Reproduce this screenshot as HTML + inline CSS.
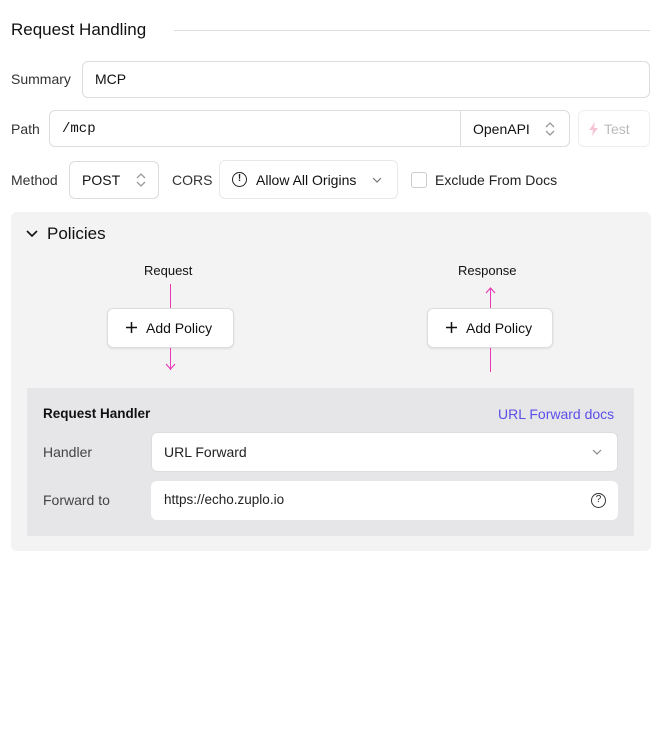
<!DOCTYPE html>
<html><head><style>
*{box-sizing:border-box;margin:0;padding:0}
body{width:670px;height:740px;background:#fff;font-family:"Liberation Sans",sans-serif;color:#222;position:relative;overflow:hidden}
.a{position:absolute}
.box{position:absolute;background:#fff;border:1px solid #dcdcdf;border-radius:6px}
.t{position:absolute;font-size:14px;color:#333}
.pink{position:absolute;width:1px;background:#e83ab5}
svg{position:absolute}
</style></head><body>
<div class="t" style="left:11px;top:20px;font-size:17px;color:#111">Request Handling</div>
<div class="a" style="left:174px;top:30px;width:476px;height:1px;background:#ddd"></div>

<div class="t" style="left:11px;top:71px">Summary</div>
<div class="box" style="left:82px;top:61px;width:568px;height:37px"></div>
<div class="t" style="left:95px;top:71px;color:#111">MCP</div>

<div class="t" style="left:11px;top:121px">Path</div>
<div class="box" style="left:49px;top:110px;width:521px;height:37px"></div>
<div class="a" style="left:460px;top:111px;width:1px;height:35px;background:#ddd"></div>
<div class="t" style="left:62px;top:121px;font-family:'Liberation Mono',monospace;color:#111">/mcp</div>
<div class="t" style="left:473px;top:121px;color:#111">OpenAPI</div>
<svg style="left:544px;top:121px" width="12" height="16" viewBox="0 0 12 16"><path d="M2 6l4-4 4 4M2 10l4 4 4-4" fill="none" stroke="#999" stroke-width="1.3"/></svg>
<div class="box" style="left:578px;top:110px;width:72px;height:37px;border-color:#eee"></div>
<svg style="left:588px;top:122px" width="11" height="14" viewBox="0 0 11 14"><path d="M7 0L1 8h4l-1 6 6-8H6z" fill="#f6c4d6"/></svg>
<div class="t" style="left:604px;top:121px;color:#bbb">Test</div>

<div class="t" style="left:11px;top:172px">Method</div>
<div class="box" style="left:69px;top:161px;width:90px;height:38px"></div>
<div class="t" style="left:82px;top:172px;color:#111">POST</div>
<svg style="left:135px;top:172px" width="12" height="16" viewBox="0 0 12 16"><path d="M2 6l4-4 4 4M2 10l4 4 4-4" fill="none" stroke="#999" stroke-width="1.3"/></svg>
<div class="t" style="left:172px;top:172px">CORS</div>
<div class="box" style="left:219px;top:160px;width:179px;height:39px;border-color:#e8e8e8"></div>
<div class="a" style="left:232px;top:172px;width:15px;height:15px;border:1.5px solid #222;border-radius:50%;font-size:10px;text-align:center;line-height:12px;font-weight:bold">!</div>
<div class="t" style="left:256px;top:172px;color:#111">Allow All Origins</div>
<svg style="left:372px;top:176px" width="10" height="8" viewBox="0 0 10 8"><path d="M1 2l4 4 4-4" fill="none" stroke="#777" stroke-width="1.2"/></svg>
<div class="a" style="left:411px;top:172px;width:16px;height:16px;border:1px solid #ccc;border-radius:3px"></div>
<div class="t" style="left:435px;top:172px;color:#222">Exclude From Docs</div>

<div class="a" style="left:11px;top:212px;width:640px;height:339px;background:#f3f3f4;border-radius:6px"></div>
<svg style="left:26px;top:229px" width="12" height="9" viewBox="0 0 12 9"><path d="M1 2l5 5 5-5" fill="none" stroke="#111" stroke-width="1.6"/></svg>
<div class="t" style="left:47px;top:224px;font-size:17px;color:#111">Policies</div>

<div class="t" style="left:144px;top:263px;font-size:13px;color:#111">Request</div>
<div class="pink" style="left:170px;top:284px;height:24px"></div>
<div class="box" style="left:107px;top:308px;width:127px;height:40px;box-shadow:0 1px 2px rgba(0,0,0,.08)"></div>
<svg style="left:125px;top:321px" width="13" height="13" viewBox="0 0 13 13"><path d="M6.5 1v11M1 6.5h11" stroke="#111" stroke-width="1.5"/></svg>
<div class="t" style="left:146px;top:320px;color:#111">Add Policy</div>
<div class="pink" style="left:170px;top:348px;height:22px"></div>
<svg style="left:165px;top:362px" width="11" height="9" viewBox="0 0 11 9"><path d="M1 2l4.5 5 4.5-5" fill="none" stroke="#e83ab5" stroke-width="1.2"/></svg>

<div class="t" style="left:458px;top:263px;font-size:13px;color:#111">Response</div>
<svg style="left:485px;top:286px" width="11" height="9" viewBox="0 0 11 9"><path d="M1 7l4.5-5 4.5 5" fill="none" stroke="#e83ab5" stroke-width="1.2"/></svg>
<div class="pink" style="left:490px;top:288px;height:20px"></div>
<div class="box" style="left:427px;top:308px;width:126px;height:40px;box-shadow:0 1px 2px rgba(0,0,0,.08)"></div>
<svg style="left:445px;top:321px" width="13" height="13" viewBox="0 0 13 13"><path d="M6.5 1v11M1 6.5h11" stroke="#111" stroke-width="1.5"/></svg>
<div class="t" style="left:466px;top:320px;color:#111">Add Policy</div>
<div class="pink" style="left:490px;top:348px;height:24px"></div>

<div class="a" style="left:27px;top:388px;width:607px;height:148px;background:#e6e6e9;border-radius:2px"></div>
<div class="t" style="left:43px;top:406px;color:#111;font-weight:bold;font-size:13.5px">Request Handler</div>
<div class="t" style="left:498px;top:406px;color:#5a4fe8">URL Forward docs</div>
<div class="t" style="left:43px;top:444px;color:#444">Handler</div>
<div class="box" style="left:151px;top:432px;width:467px;height:40px;border-color:#ddd"></div>
<div class="t" style="left:164px;top:444px;color:#222">URL Forward</div>
<svg style="left:592px;top:448px" width="10" height="8" viewBox="0 0 10 8"><path d="M1 2l4 4 4-4" fill="none" stroke="#888" stroke-width="1.2"/></svg>
<div class="t" style="left:43px;top:492px;color:#444">Forward to</div>
<div class="box" style="left:151px;top:481px;width:467px;height:39px;border:none"></div>
<div class="t" style="left:164px;top:492px;color:#222;font-size:13.5px">https://echo.zuplo.io</div>
<div class="a" style="left:591px;top:493px;width:15px;height:15px;border:1.3px solid #333;border-radius:50%;font-size:10px;text-align:center;line-height:12px">?</div>
</body></html>
